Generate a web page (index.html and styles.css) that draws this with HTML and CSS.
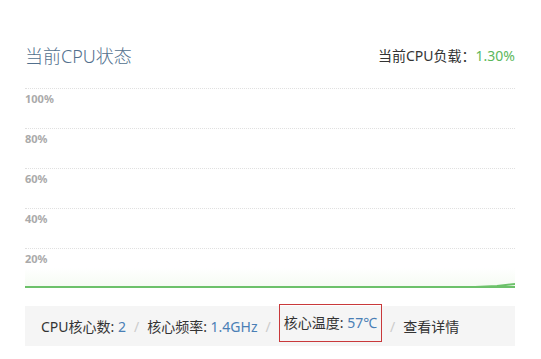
FILE: index.html
```html
<!DOCTYPE html>
<html lang="zh-CN">
<head>
  <meta charset="utf-8">
  <link rel="stylesheet" href="styles.css">
</head>
<body>
  <div class="panel">
    <div class="header">
      <h2 class="title">当前CPU状态</h2>
      <div class="load">当前CPU负载：<span class="load_value">1.30%</span></div>
    </div>

    <div class="chart">
      <div class="row"><span class="label">100%</span></div>
      <div class="row"><span class="label">80%</span></div>
      <div class="row"><span class="label">60%</span></div>
      <div class="row"><span class="label">40%</span></div>
      <div class="row last"><span class="label">20%</span></div>
      <!-- load curve: flat, small rise at the right end -->
      <svg class="curve" width="40" height="8" viewBox="0 0 40 8">
        <polyline points="0,7 22,6 40,4" fill="none" stroke="#6cc16a" stroke-width="2"/>
      </svg>
    </div>

    <div class="info">
      <span class="item">CPU核心数: <span class="value">2</span></span>
      <span class="sep">/</span>
      <span class="item">核心频率: <span class="value">1.4GHz</span></span>
      <span class="sep">/</span>
      <span class="item marked">核心温度: <span class="value">57℃</span></span>
      <span class="sep">/</span>
      <span class="item">查看详情</span>
    </div>
  </div>
</body>
</html>
```
FILE: styles.css
```css
body{
  margin: 0;
  background-color: #fff;
  font-family: "Noto Sans", "Noto Sans CJK SC", sans-serif;
  color: #333;
}
.panel{
  width: 490px;
  padding: 44px 0 0 25px;
}
.header{
  display: flex;
  justify-content: space-between;
  align-items: center;
  height: 24px;
}
.title{
  margin: 0;
  font-size: 18px;
  font-weight: 300;
  line-height: 24px;
  color: #52708e;
}
.load{
  font-size: 14px;
  line-height: 24px;
  color: #333;
}
.load_value{
  color: #5cb85c;
}
.chart{
  position: relative;
  margin-top: 20px;
  background: linear-gradient(to bottom, #fff 90%, #f5fbf2 100%);
}
.row{
  height: 39px;
  border-top: 1px dotted #e0e0e0;
}
.row.last{
  height: 37px;
  border-bottom: 2px solid #6cc16a;
}
.curve{
  position: absolute;
  right: 0;
  bottom: 0;
}
.label{
  display: block;
  padding-top: 2px;
  font-size: 11px;
  line-height: 16px;
  font-weight: bold;
  color: #aaa;
}
.info{
  display: flex;
  align-items: center;
  height: 40px;
  margin-top: 18px;
  padding-left: 16px;
  background-color: #f5f5f5;
  font-size: 14px;
  color: #333;
}
.value{
  color: #4a7fb5;
}
.sep{
  margin: 0 8px;
  color: #ccc;
}
.marked{
  align-self: flex-start;
  margin-top: -2px;
  height: 36px;
  line-height: 36px;
  padding: 0 4px;
  border: 1px solid #c9393b;
}
```
